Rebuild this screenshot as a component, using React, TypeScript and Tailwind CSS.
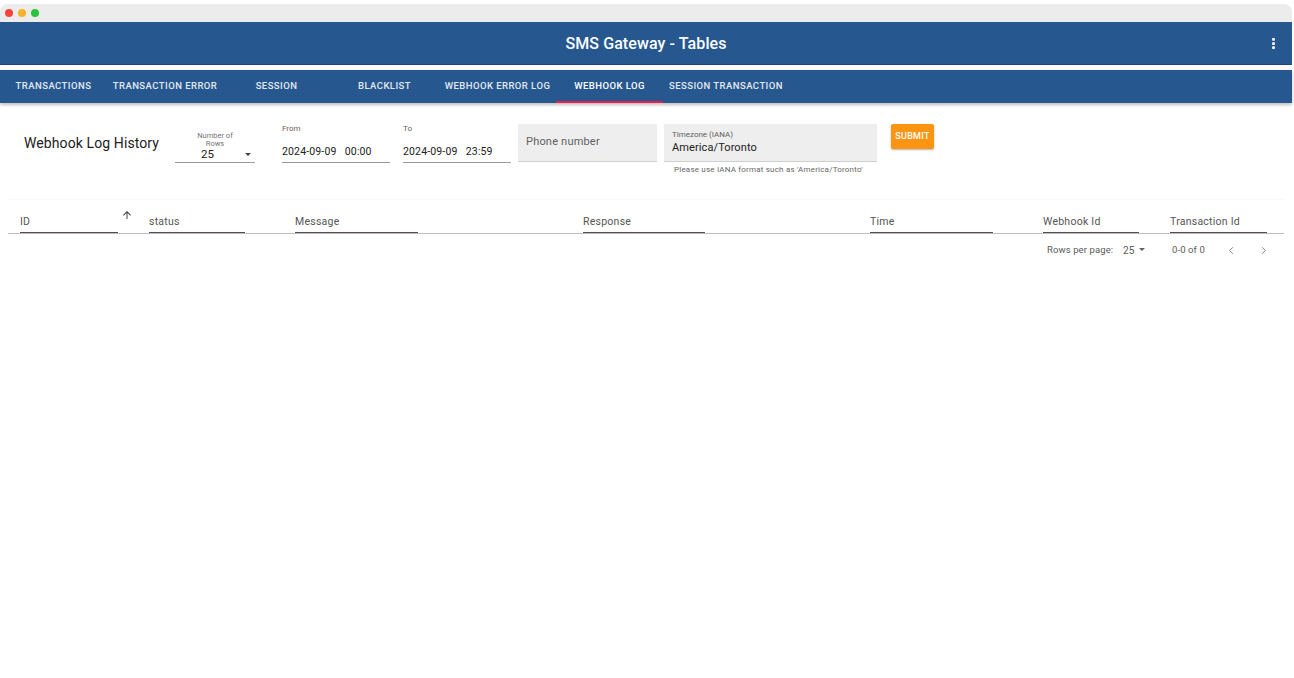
import React from "react";

const tabs = [
  { label: "TRANSACTIONS", w: "w-[107px]" },
  { label: "TRANSACTION ERROR", w: "w-[116px]" },
  { label: "SESSION", w: "w-[107px]" },
  { label: "BLACKLIST", w: "w-[109px]" },
  { label: "WEBHOOK ERROR LOG", w: "w-[117px]" },
  { label: "WEBHOOK LOG", w: "w-[107px]", active: true },
  { label: "SESSION TRANSACTION", w: "w-[126px]" },
];

const columns = [
  { label: "ID", w: "w-[129px]", line: "w-[98px]", arrow: true },
  { label: "status", w: "w-[146px]", line: "w-[96px]" },
  { label: "Message", w: "w-[288px]", line: "w-[123px]" },
  { label: "Response", w: "w-[287px]", line: "w-[122px]" },
  { label: "Time", w: "w-[173px]", line: "w-[123px]" },
  { label: "Webhook Id", w: "w-[127px]", line: "w-[96px]" },
  { label: "Transaction Id", w: "w-[114px]", line: "w-[97px]" },
];

export default function App() {
  return (
    <div className="h-[678px] w-[1294px] overflow-hidden bg-white font-['Roboto',sans-serif] text-[#212121]">
      <div className="pt-[4px] pr-[2px]">
        <div className="flex h-[18px] items-center gap-[5px] rounded-t-[8px] bg-[#ececec] pl-[5px]">
          <span className="h-[8px] w-[8px] rounded-full bg-[#f8443c]" />
          <span className="h-[8px] w-[8px] rounded-full bg-[#fbb02a]" />
          <span className="h-[8px] w-[8px] rounded-full bg-[#2ac33f]" />
        </div>
        <header className="relative flex h-[43px] items-center justify-center bg-[#26578f] shadow-[inset_0_-1px_0_#1b4675]">
          <h1 className="text-[16px] font-medium tracking-[0.1px] text-white">SMS Gateway - Tables</h1>
          <svg viewBox="0 0 4 16" className="absolute right-[17px] top-[16px] h-[11px] w-[3px] fill-white">
            <rect width="4" height="4" rx="1" />
            <rect y="6" width="4" height="4" rx="1" />
            <rect y="12" width="4" height="4" rx="1" />
          </svg>
        </header>
        <div className="h-[5px] bg-[#fdf9f8]" />
        <nav className="flex h-[33px] bg-[#26578f] shadow-[0_2px_3px_rgba(0,0,0,0.25)]">
          {tabs.map((t) => (
            <div
              key={t.label}
              className={`${t.w} flex items-center justify-center whitespace-nowrap border-b-2 pt-[1px] text-[9.5px] font-medium tracking-[0.45px] ${
                t.active ? "border-[#e91e50] text-white" : "border-transparent text-[#e3e9f1]"
              }`}
            >
              {t.label}
            </div>
          ))}
        </nav>
      </div>

      <section className="flex h-[96px] items-start pl-[24px] pt-[21px]">
        <h2 className="mt-[10px] w-[151px] text-[14px] leading-[18px] tracking-[0.1px]">Webhook Log History</h2>

        <div className="mt-[8px] w-[80px]">
          <div className="text-center text-[7.5px] leading-[8px] text-[#757575]">
            Number of
            <br />
            Rows
          </div>
          <div className="relative h-[15px] border-b border-[#9a9a9a] pl-[26px] text-[11.5px] leading-[13px]">
            25
            <span className="absolute right-[4px] top-[5px] h-0 w-0 border-x-[3px] border-t-[3px] border-x-transparent border-t-[#424242]" />
          </div>
        </div>

        <div className="ml-[27px] w-[108px]">
          <div className="h-[20px] text-[8px] leading-[9px] text-[#7a5a55]">From</div>
          <div className="h-[19px] whitespace-pre border-b border-[#9a9a9a] text-[10.5px] leading-[15px] tracking-[0.15px]">
            2024-09-09   00:00
          </div>
        </div>

        <div className="ml-[13px] w-[108px]">
          <div className="h-[20px] text-[8px] leading-[9px] text-[#616161]">To</div>
          <div className="h-[19px] whitespace-pre border-b border-[#9a9a9a] text-[10.5px] leading-[15px] tracking-[0.15px]">
            2024-09-09   23:59
          </div>
        </div>

        <div className="ml-[7px] flex h-[38px] w-[139px] items-center border-b border-[#cfcfcf] bg-[#eeeeee] pl-[8px] text-[11px] tracking-[0.2px] text-[#616161]">
          Phone number
        </div>

        <div className="ml-[7px] w-[213px]">
          <div className="h-[38px] border-b border-[#cfcfcf] bg-[#eeeeee] pl-[8px] pt-[6px]">
            <div className="text-[8px] leading-[9px] text-[#616161]">Timezone (IANA)</div>
            <div className="mt-[2px] text-[11px] leading-[14px] tracking-[0.1px]">America/Toronto</div>
          </div>
          <div className="mt-[2px] pl-[10px] text-[8px] leading-[11px] tracking-[0.2px] text-[#666666]">
            Please use IANA format such as 'America/Toronto'
          </div>
        </div>

        <button className="ml-[14px] h-[25px] w-[43px] rounded-[2px] bg-[#fb9511] text-[9px] font-medium tracking-[0.3px] text-white shadow-[0_1px_2px_rgba(0,0,0,0.3)]">
          SUBMIT
        </button>
      </section>

      <section className="mx-[8px] w-[1276px] border-t border-[#fafafa]">
        <div className="flex h-[34px] items-end border-b border-[#bdbdbd] pl-[12px]">
          {columns.map((c) => (
            <div key={c.label} className={`relative ${c.w} shrink-0`}>
              <div className="pb-[4px] text-[10.5px] leading-[13px] tracking-[0.25px] text-[#555555]">{c.label}</div>
              <div className={`${c.line} h-px bg-[#5a4a4c]`} />
              {c.arrow && (
                <svg viewBox="0 0 24 24" className="absolute left-[101px] top-[-6px] h-[12px] w-[12px] fill-[#424242]">
                  <path d="M4 12l1.41 1.41L11 7.83V20h2V7.83l5.58 5.59L20 12l-8-8-8 8z" />
                </svg>
              )}
            </div>
          ))}
        </div>
        <div className="flex h-[32px] items-center text-[9.5px] tracking-[0.1px] text-[#5a5a5a]">
          <span className="ml-[1039px] w-[76px]">Rows per page:</span>
          <span className="relative w-[49px] text-[10px]">
            25
            <span className="absolute left-[16px] top-[5px] h-0 w-0 border-x-[3px] border-t-[3px] border-x-transparent border-t-[#616161]" />
          </span>
          <span className="w-[54px]">0-0 of 0</span>
          <svg viewBox="0 0 24 24" className="h-[11px] w-[11px] fill-none stroke-[#757575] stroke-2">
            <path d="M15 5l-7 7 7 7" />
          </svg>
          <svg viewBox="0 0 24 24" className="ml-[21px] h-[11px] w-[11px] fill-none stroke-[#757575] stroke-2">
            <path d="M9 5l7 7-7 7" />
          </svg>
        </div>
      </section>
    </div>
  );
}
